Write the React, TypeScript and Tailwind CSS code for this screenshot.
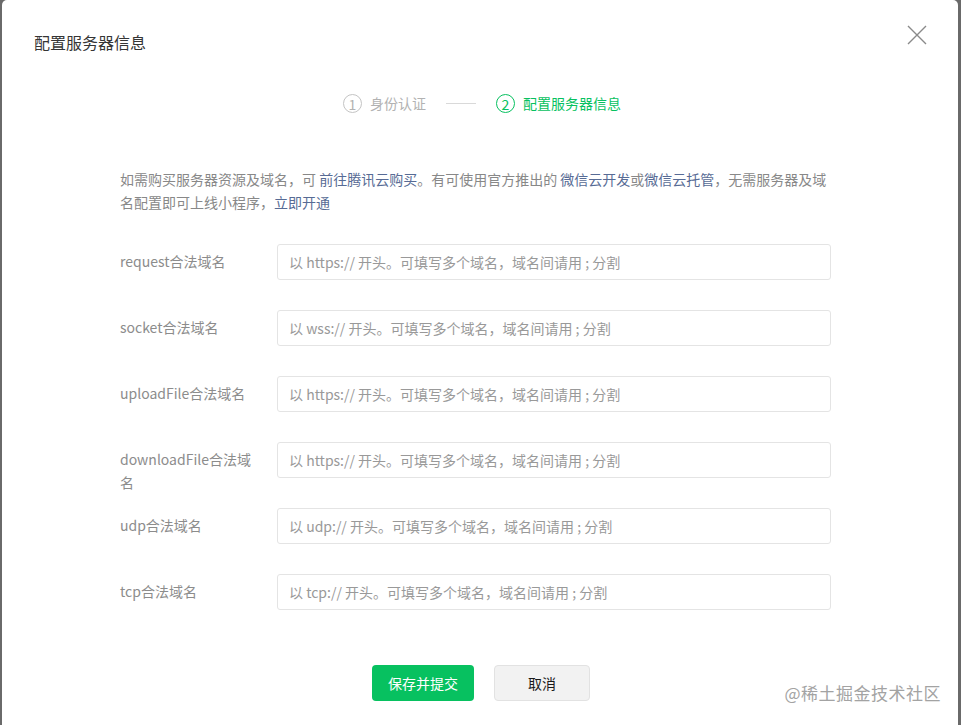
import React from "react";

const FONT = { fontFamily: '"Noto Sans CJK SC", "Noto Sans", sans-serif' };

const rows = [
  { label: "request合法域名", ph: "以 https:// 开头。可填写多个域名，域名间请用 ; 分割" },
  { label: "socket合法域名", ph: "以 wss:// 开头。可填写多个域名，域名间请用 ; 分割" },
  { label: "uploadFile合法域名", ph: "以 https:// 开头。可填写多个域名，域名间请用 ; 分割" },
  { label: "downloadFile合法域名", ph: "以 https:// 开头。可填写多个域名，域名间请用 ; 分割" },
  { label: "udp合法域名", ph: "以 udp:// 开头。可填写多个域名，域名间请用 ; 分割" },
  { label: "tcp合法域名", ph: "以 tcp:// 开头。可填写多个域名，域名间请用 ; 分割" },
];

function Step({ n, text, active }: { n: number; text: string; active?: boolean }) {
  const color = active ? "text-[#07c160] border-[#07c160]" : "text-[#b2b2b2] border-[#c4c4c4]";
  return (
    <div className={`flex items-center gap-2 ${active ? "text-[#07c160]" : "text-[#b2b2b2]"}`}>
      <span
        className={`flex h-[19px] w-[19px] items-center justify-center rounded-full border text-[14px] leading-none ${color}`}
      >
        {n}
      </span>
      <span className="text-[14px]">{text}</span>
    </div>
  );
}

export default function App() {
  return (
    <div className="h-[725px] w-[961px] overflow-hidden bg-[#6a6a6a] pl-[2px] pr-[3px]" style={FONT}>
      <div className="relative h-full rounded-t-[5px] bg-white">
        <div className="flex items-start justify-between pl-8 pr-[30px] pt-[31px]">
          <h1 className="text-[16px] leading-[22px] text-[#353535]">配置服务器信息</h1>
          <button className="-mt-[7px] text-[#8a8a8a]" aria-label="关闭">
            <svg width="22" height="22" viewBox="0 0 22 22" fill="none" stroke="currentColor" strokeWidth="1.4">
              <path d="M2 2 L20 20 M20 2 L2 20" />
            </svg>
          </button>
        </div>

        <div className="mt-[40px] flex items-center justify-center gap-5 pl-[4px]">
          <Step n={1} text="身份认证" />
          <span className="h-px w-[30px] bg-[#d9d9d9]" />
          <Step n={2} text="配置服务器信息" active />
        </div>

        <div className="pl-[118px] pr-[118px] pt-[54px]">
          <p className="pr-[10px] text-[14px] leading-[23px] text-[#888]">
            如需购买服务器资源及域名，可 <a className="text-[#576b95]">前往腾讯云购买</a>。有可使用官方推出的{" "}
            <a className="text-[#576b95]">微信云开发</a>或<a className="text-[#576b95]">微信云托管</a>
            ，无需服务器及域名配置即可上线小程序，<a className="text-[#576b95]">立即开通</a>
          </p>

          <div className="mt-[30px] flex flex-col gap-[30px]">
            {rows.map((r) => (
              <div key={r.label} className="flex h-[36px] items-start">
                <label className="w-[157px] shrink-0 pr-[22px] pt-[6px] text-[14px] leading-[23px] text-[#8c8c8c] break-all">
                  {r.label}
                </label>
                <input
                  className="h-[36px] w-[554px] rounded-[3px] border border-[#e4e4e4] px-[11px] text-[14px] text-[#353535] outline-none placeholder:text-[#999]"
                  placeholder={r.ph}
                  style={FONT}
                />
              </div>
            ))}
          </div>
        </div>

        <div className="mt-[55px] flex justify-center gap-5 pl-[2px]">
          <button className="h-[36px] rounded-[4px] bg-[#07c160] px-4 text-[14px] text-white">保存并提交</button>
          <button className="h-[36px] w-[96px] rounded-[4px] border border-[#e2e2e2] bg-[#f2f2f2] text-[14px] text-[#1a1a1a]">
            取消
          </button>
        </div>

        <div className="absolute bottom-[20px] right-[17px] text-[17px] tracking-[0.5px] text-[#a3a3a3]">
          @稀土掘金技术社区
        </div>
      </div>
    </div>
  );
}
